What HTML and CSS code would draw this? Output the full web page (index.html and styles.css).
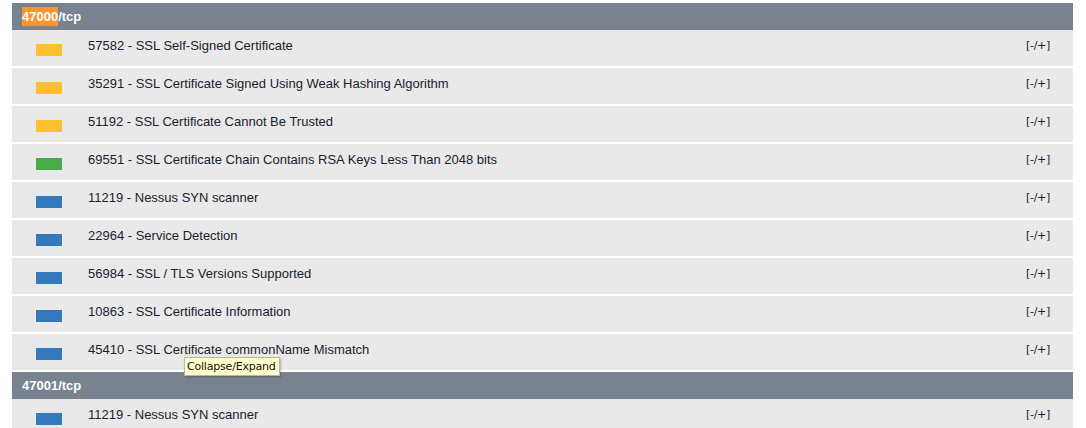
FILE: index.html
```html
<!DOCTYPE html>
<html>
<head>
<meta charset="utf-8">
<link rel="stylesheet" href="styles.css">
</head>
<body>
<div class="report">
  <div class="port-header"><span class="hl">47000</span>/tcp</div>
  <div class="row"><span class="sev sev-medium"></span><span class="name">57582 - SSL Self-Signed Certificate</span><span class="toggle">[-/+]</span></div>
  <div class="row"><span class="sev sev-medium"></span><span class="name">35291 - SSL Certificate Signed Using Weak Hashing Algorithm</span><span class="toggle">[-/+]</span></div>
  <div class="row"><span class="sev sev-medium"></span><span class="name">51192 - SSL Certificate Cannot Be Trusted</span><span class="toggle">[-/+]</span></div>
  <div class="row"><span class="sev sev-low"></span><span class="name">69551 - SSL Certificate Chain Contains RSA Keys Less Than 2048 bits</span><span class="toggle">[-/+]</span></div>
  <div class="row"><span class="sev sev-info"></span><span class="name">11219 - Nessus SYN scanner</span><span class="toggle">[-/+]</span></div>
  <div class="row"><span class="sev sev-info"></span><span class="name">22964 - Service Detection</span><span class="toggle">[-/+]</span></div>
  <div class="row"><span class="sev sev-info"></span><span class="name">56984 - SSL / TLS Versions Supported</span><span class="toggle">[-/+]</span></div>
  <div class="row"><span class="sev sev-info"></span><span class="name">10863 - SSL Certificate Information</span><span class="toggle">[-/+]</span></div>
  <div class="row tip-anchor"><span class="sev sev-info"></span><span class="name">45410 - SSL Certificate commonName Mismatch</span><span class="toggle">[-/+]</span><div class="tooltip">Collapse/Expand</div></div>
  <div class="port-header">47001/tcp</div>
  <div class="row"><span class="sev sev-info"></span><span class="name">11219 - Nessus SYN scanner</span><span class="toggle">[-/+]</span></div>
</div>
</body>
</html>
```
FILE: styles.css
```css
html, body {
  margin: 0;
  padding: 0;
  background: #ffffff;
}
body {
  font-family: "Liberation Sans", Arial, sans-serif;
  overflow: hidden;
}
.report {
  width: 1061px;
  margin: 3px 0 0 12px;
  display: flex;
  flex-direction: column;
}
.port-header {
  height: 27px;
  background: #78838f;
  color: #ffffff;
  font-weight: bold;
  font-size: 13px;
  line-height: 27px;
  padding-left: 10px;
}
.hl {
  background: #f7952f;
  padding: 2px 0;
}
.row {
  height: 36px;
  background: #e9e9e9;
  margin-bottom: 2px;
  display: flex;
  align-items: flex-start;
  position: relative;
}
.sev {
  width: 26px;
  height: 12px;
  margin: 14px 0 0 24px;
  flex: none;
}
.sev-medium { background: #fdc02f; }
.sev-low { background: #4aab4c; }
.sev-info { background: #357abf; }
.name {
  margin: 8px 0 0 26px;
  font-size: 13px;
  line-height: 15px;
  color: #18222e;
  flex: 1;
}
.toggle {
  margin: 8px 23px 0 0;
  font-family: "DejaVu Sans", Verdana, sans-serif;
  font-size: 11px;
  line-height: 15px;
  color: #18222e;
  letter-spacing: -0.3px;
}
.tooltip {
  position: absolute;
  left: 172px;
  top: 23px;
  background: #ffffca;
  border: 1px solid #b8b8a0;
  font-family: "DejaVu Sans", Verdana, sans-serif;
  font-size: 11px;
  line-height: 17px;
  padding: 0 3px 0 2px;
  letter-spacing: -0.2px;
  color: #111;
  box-shadow: 1px 1px 2px rgba(0,0,0,0.25);
  white-space: nowrap;
  z-index: 2;
}
```
